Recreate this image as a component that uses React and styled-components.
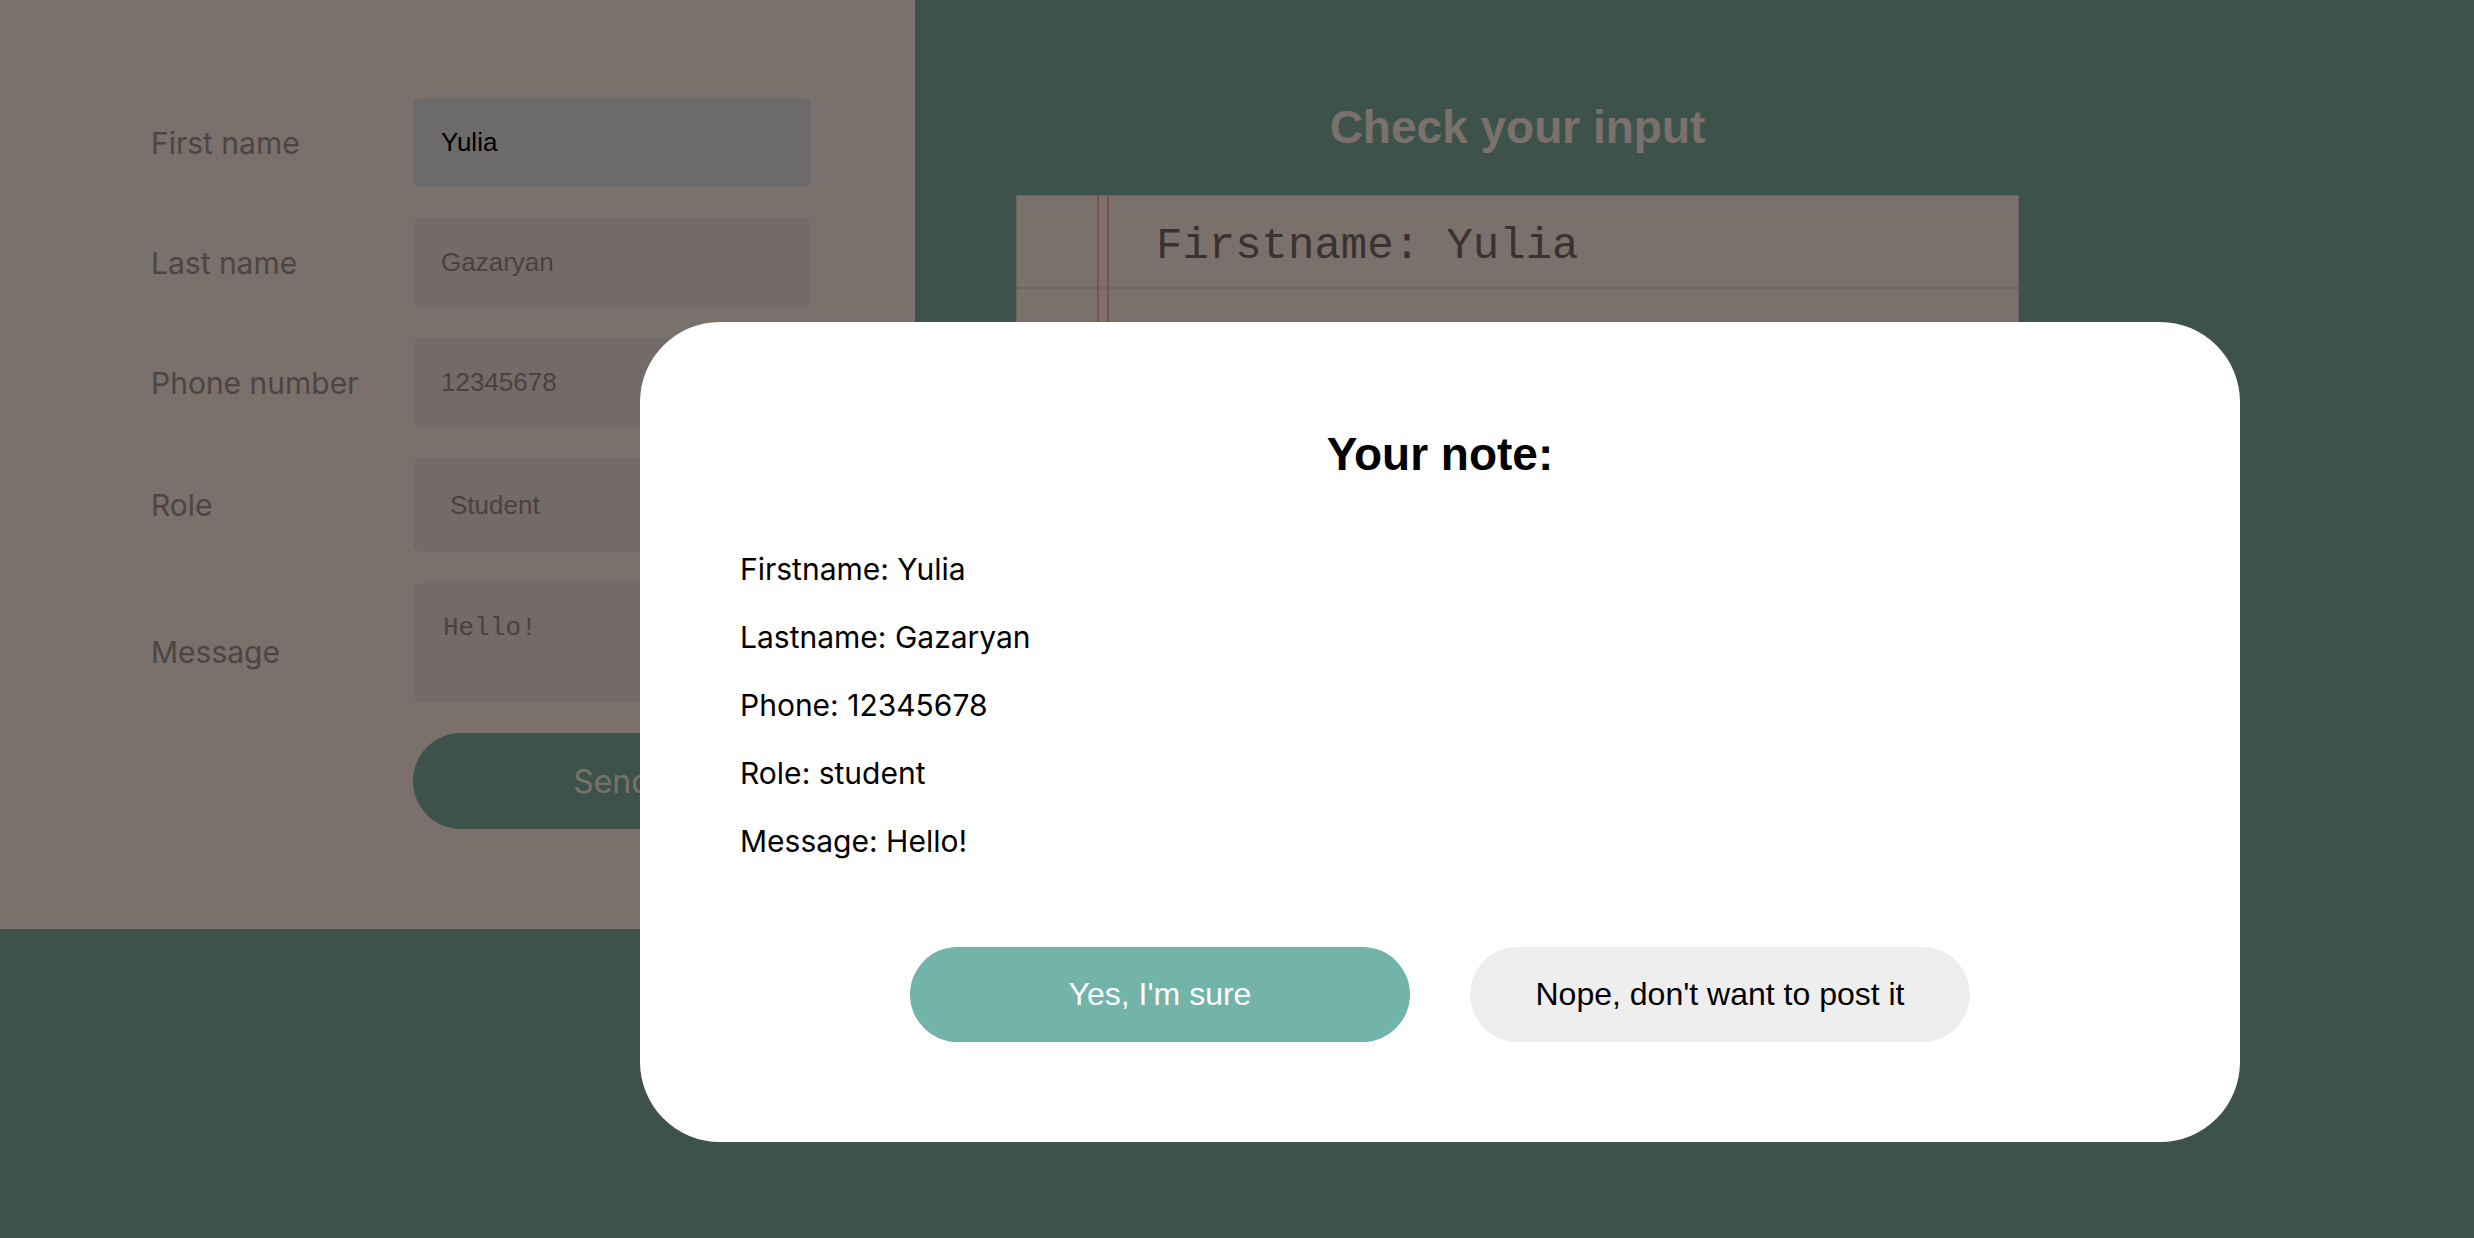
import React from 'react';
import styled, { createGlobalStyle } from 'styled-components';

const GlobalStyle = createGlobalStyle`
    * { box-sizing: border-box; }
    body {
        margin: 0;
        background: #7ba496;
        font-family: Inter, "Noto Sans", sans-serif;
    }
`;

const Page = styled.div`
    display: flex;
    align-items: flex-start;
`;

const FormPanel = styled.form`
    width: 915px;
    flex-shrink: 0;
    background: #f4e0d8;
    padding: 98px 0 100px 151px;
    display: grid;
    grid-template-columns: 262px 398px;
    row-gap: 31px;
    align-items: center;
`;

const Label = styled.label`
    font-size: 30px;
    color: #9c8b86;
    padding-top: ${p => p.$shift || 0}px;
`;

const Field = styled.input`
    height: 89px;
    border: none;
    border-radius: 8px;
    padding: 0 28px;
    font-family: "Liberation Sans", Arial, sans-serif;
    font-size: 26px;
    color: ${p => (p.$focused ? '#000' : '#968480')};
    background: ${p => (p.$focused ? '#dad5d7' : '#e6d6ce')};
    outline: none;
`;

const Select = styled.select`
    appearance: none;
    height: 94px;
    border: none;
    border-radius: 8px;
    padding: 0 37px;
    font-family: "Liberation Sans", Arial, sans-serif;
    font-size: 26px;
    color: #968480;
    background: #e6d6ce;
`;

const TextArea = styled.textarea`
    height: 119px;
    border: none;
    border-radius: 8px;
    padding: 30px 30px;
    font-family: "Liberation Mono", monospace;
    font-size: 26px;
    color: #968480;
    background: #e6d6ce;
    resize: none;
`;

const SendButton = styled.button`
    grid-column: 2;
    height: 96px;
    border: none;
    border-radius: 48px;
    background: #7ba496;
    color: #f4e0d8;
    font-family: Inter, sans-serif;
    font-size: 32px;
`;

const Preview = styled.section`
    flex: 1;
    padding: 100px 0 0 101px;
`;

const PreviewInner = styled.div`
    width: 1003px;
`;

const PreviewTitle = styled.h2`
    margin: 0;
    text-align: center;
    font-family: "Liberation Sans", Arial, sans-serif;
    font-weight: bold;
    font-size: 46px;
    color: #f4e0d8;
`;

const Notebook = styled.div`
    position: relative;
    margin-top: 41px;
    background: #f4e0d8;
    border: 1px solid #d6c4bc;

    &::before {
        content: '';
        position: absolute;
        top: 0;
        bottom: 0;
        left: 80px;
        width: 8px;
        border-left: 2px solid #ffa080;
        border-right: 2px solid #ffa080;
    }
`;

const NoteRow = styled.div`
    padding: 25px 0 16px 139px;
    border-bottom: 2px dotted #cebcb4;
    font-family: "Liberation Mono", "Courier New", monospace;
    font-size: 44px;
    color: #766460;
`;

const Overlay = styled.div`
    position: fixed;
    inset: 0;
    background: rgba(0, 0, 0, 0.5);
    display: flex;
    align-items: flex-start;
    padding: 322px 0 0 640px;
`;

const Modal = styled.div`
    width: 1600px;
    background: #fff;
    border-radius: 80px;
    padding: 105px 100px 100px;
`;

const ModalTitle = styled.h2`
    margin: 0;
    text-align: center;
    font-family: "Liberation Sans", Arial, sans-serif;
    font-weight: bold;
    font-size: 46px;
    color: #000;
`;

const NoteList = styled.div`
    margin-top: 70px;
    display: flex;
    flex-direction: column;
    gap: 32px;
    font-family: Inter, sans-serif;
    font-size: 30px;
    line-height: 36px;
    color: #000;
`;

const Actions = styled.div`
    margin-top: 88px;
    display: flex;
    justify-content: center;
    gap: 60px;
`;

const ActionButton = styled.button`
    width: 500px;
    height: 95px;
    border: none;
    border-radius: 48px;
    font-family: "Liberation Sans", Arial, sans-serif;
    font-size: 32px;
    background: ${p => (p.$primary ? '#72b3aa' : '#eeeeee')};
    color: ${p => (p.$primary ? '#fff' : '#000')};
`;

const note = {
    Firstname: 'Yulia',
    Lastname: 'Gazaryan',
    Phone: '12345678',
    Role: 'student',
    Message: 'Hello!',
};

const App = () => {
    return (
        <>
            <GlobalStyle />
            <Page>
                <FormPanel onSubmit={e => e.preventDefault()}>
                    <Label>First name</Label>
                    <Field $focused defaultValue="Yulia" />
                    <Label>Last name</Label>
                    <Field defaultValue="Gazaryan" />
                    <Label>Phone number</Label>
                    <Field defaultValue="12345678" />
                    <Label>Role</Label>
                    <Select defaultValue="student">
                        <option value="student">Student</option>
                        <option value="teacher">Teacher</option>
                    </Select>
                    <Label $shift={18}>Message</Label>
                    <TextArea defaultValue="Hello!" />
                    <SendButton type="submit">Send</SendButton>
                </FormPanel>
                <Preview>
                    <PreviewInner>
                        <PreviewTitle>Check your input</PreviewTitle>
                        <Notebook>
                            {Object.entries(note).map(([k, v]) => (
                                <NoteRow key={k}>{k}: {k === 'Role' ? 'Student' : v}</NoteRow>
                            ))}
                        </Notebook>
                    </PreviewInner>
                </Preview>
            </Page>
            <Overlay>
                <Modal>
                    <ModalTitle>Your note:</ModalTitle>
                    <NoteList>
                        {Object.entries(note).map(([k, v]) => (
                            <div key={k}>{k}: {v}</div>
                        ))}
                    </NoteList>
                    <Actions>
                        <ActionButton $primary>Yes, I'm sure</ActionButton>
                        <ActionButton>Nope, don't want to post it</ActionButton>
                    </Actions>
                </Modal>
            </Overlay>
        </>
    );
};

export default App;
